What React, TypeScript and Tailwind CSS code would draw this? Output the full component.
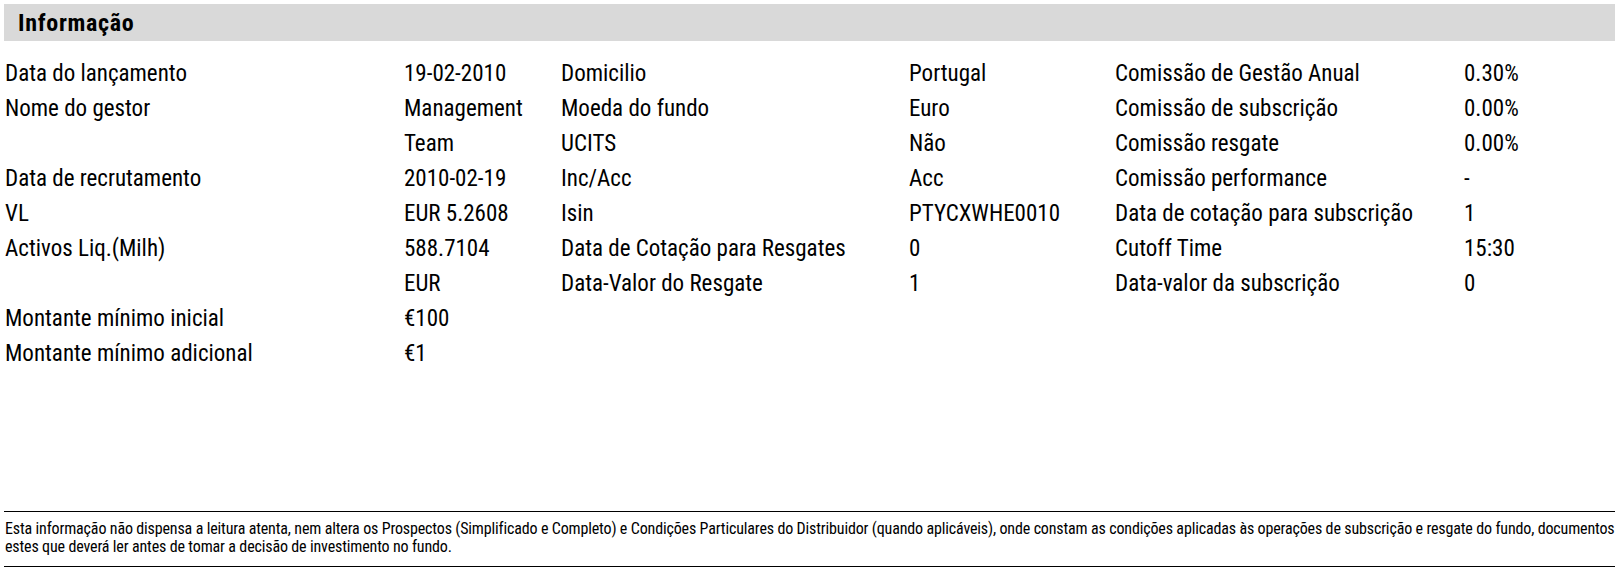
import React from 'react';

type Row = { label: string; value: string[] };

const col1: Row[] = [
  { label: 'Data do lançamento', value: ['19-02-2010'] },
  { label: 'Nome do gestor', value: ['Management', 'Team'] },
  { label: 'Data de recrutamento', value: ['2010-02-19'] },
  { label: 'VL', value: ['EUR 5.2608'] },
  { label: 'Activos Liq.(Milh)', value: ['588.7104', 'EUR'] },
  { label: 'Montante mínimo inicial', value: ['€100'] },
  { label: 'Montante mínimo adicional', value: ['€1'] },
];

const col2: Row[] = [
  { label: 'Domicilio', value: ['Portugal'] },
  { label: 'Moeda do fundo', value: ['Euro'] },
  { label: 'UCITS', value: ['Não'] },
  { label: 'Inc/Acc', value: ['Acc'] },
  { label: 'Isin', value: ['PTYCXWHE0010'] },
  { label: 'Data de Cotação para Resgates', value: ['0'] },
  { label: 'Data-Valor do Resgate', value: ['1'] },
];

const col3: Row[] = [
  { label: 'Comissão de Gestão Anual', value: ['0.30%'] },
  { label: 'Comissão de subscrição', value: ['0.00%'] },
  { label: 'Comissão resgate', value: ['0.00%'] },
  { label: 'Comissão performance', value: ['-'] },
  { label: 'Data de cotação para subscrição', value: ['1'] },
  { label: 'Cutoff Time', value: ['15:30'] },
  { label: 'Data-valor da subscrição', value: ['0'] },
];

const InfoGroup = ({ rows, grid }: { rows: Row[]; grid: string }) => (
  <div className={`grid ${grid} content-start`}>
    {rows.map((r) => (
      <React.Fragment key={r.label}>
        <div className="whitespace-nowrap">{r.label}</div>
        <div className="whitespace-nowrap">
          {r.value.map((v, i) => (
            <div key={i}>{v}</div>
          ))}
        </div>
      </React.Fragment>
    ))}
  </div>
);

export default function App() {
  return (
    <div className="flex min-h-screen flex-col bg-white px-1 pt-1 pb-[5px] text-black font-['Roboto_Condensed','Liberation_Sans',sans-serif]">
      {/* header bar */}
      <div className="flex h-[37px] items-center bg-[#d9d9d9] pl-[14px]">
        <h2 className="text-[24px] font-bold tracking-[0.7px]">Informação</h2>
      </div>

      <div className="mt-[15px] flex pl-px text-[23px] leading-[35px]">
        <div className="w-[556px]">
          <InfoGroup rows={col1} grid="grid-cols-[399px_1fr]" />
        </div>
        <div className="w-[554px]">
          <InfoGroup rows={col2} grid="grid-cols-[348px_1fr]" />
        </div>
        <div className="flex-1">
          <InfoGroup rows={col3} grid="grid-cols-[349px_1fr]" />
        </div>
      </div>

      {/* disclaimer */}
      <div className="mt-auto border-y border-black pt-2 pb-[10px] pl-px text-[16px] leading-[18px] tracking-[-0.15px] whitespace-nowrap">
        Esta informação não dispensa a leitura atenta, nem altera os Prospectos (Simplificado e Completo) e Condições Particulares do Distribuidor (quando aplicáveis), onde constam as condições aplicadas às operações de subscrição e resgate do fundo, documentos
        <br />
        estes que deverá ler antes de tomar a decisão de investimento no fundo.
      </div>
    </div>
  );
}
